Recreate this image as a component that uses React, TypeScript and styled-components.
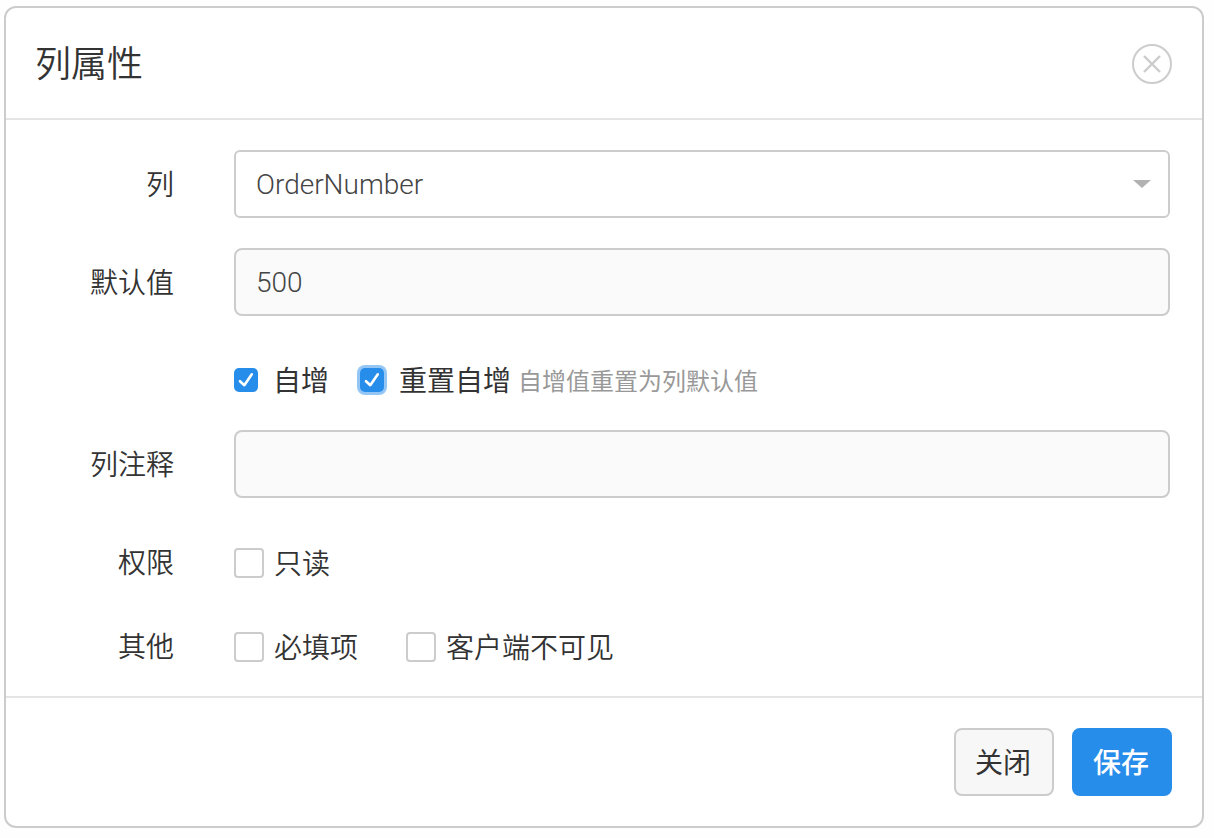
import React, { useState } from "react";
import styled, { createGlobalStyle, css } from "styled-components";

const GlobalStyle = createGlobalStyle`
  *, *::before, *::after { box-sizing: border-box; }
  body {
    margin: 0;
    background: #fefefe;
    color: #333;
    font-family: Roboto, "Noto Sans CJK SC", sans-serif;
    font-size: 28px;
    font-weight: 350;
    line-height: 40px;
  }
`;

const Page = styled.main`
  padding: 6px 10px 10px 4px;
`;

const Dialog = styled.form`
  border: 2px solid #ccc;
  border-radius: 12px;
  background: #fff;
`;

const Header = styled.header`
  display: flex;
  align-items: center;
  justify-content: space-between;
  padding: 28px 30px 26px 29px;
  border-bottom: 2px solid #e4e4e4;
`;

const Title = styled.h1`
  margin: 0;
  padding-top: 2px;
  font-size: 36px;
  font-weight: 350;
  line-height: 54px;
`;

const CloseIcon = styled.button`
  display: flex;
  width: 40px;
  height: 40px;
  padding: 0;
  border: 0;
  background: none;
  cursor: pointer;
`;

const Body = styled.div`
  padding: 30px 32px 0 30px;
`;

const Row = styled.div<{ $compact?: boolean }>`
  display: grid;
  grid-template-columns: 138px minmax(0, 1fr);
  column-gap: 60px;
  align-items: center;
  min-height: 68px;
  margin-bottom: ${(p) => (p.$compact ? 16 : 30)}px;
`;

const labelText = css`
  grid-column: 1;
  padding-top: 4px;
  text-align: right;
`;

const FieldLabel = styled.label`
  ${labelText}
`;

const GroupLabel = styled.span`
  ${labelText}
`;

const control = css`
  display: block;
  width: 100%;
  height: 68px;
  padding: 0 20px;
  border: 2px solid #ccc;
  font: inherit;
  font-weight: 300;
  color: #444;
  outline: none;
`;

const TextInput = styled.input`
  ${control}
  border-radius: 8px;
  background: #fafafa;
`;

const SelectBox = styled.div`
  position: relative;
`;

const Select = styled.select`
  ${control}
  padding-top: 2px;
  appearance: none;
  border-radius: 6px;
  background: #fff;
`;

const Arrow = styled.svg`
  position: absolute;
  top: 30px;
  right: 19px;
  pointer-events: none;
`;

const Options = styled.div<{ $gap: number }>`
  grid-column: 2;
  display: flex;
  align-items: center;
  gap: ${(p) => p.$gap}px;
`;

const Option = styled.label<{ $filled?: boolean }>`
  display: flex;
  align-items: center;
  gap: ${(p) => (p.$filled ? 15 : 10)}px;
  padding-top: ${(p) => (p.$filled ? 0 : 2)}px;
  font-weight: ${(p) => (p.$filled ? 400 : 350)};
  cursor: pointer;
`;

const OptionText = styled.span`
  padding-top: 3px;
`;

const Tick = styled.span`
  display: grid;
  > * { grid-area: 1 / 1; }
  > svg { place-self: center; pointer-events: none; }
`;

const Box = styled.input<{ $focused?: boolean }>`
  appearance: none;
  width: 30px;
  height: 30px;
  margin: 0;
  border: 2px solid #ccc;
  border-radius: 4px;
  background: #fff;
  &:checked {
    width: 24px;
    height: 24px;
    border: 0;
    border-radius: 5px;
    background: #278dea;
    ${(p) => p.$focused && "box-shadow: 0 0 0 3px #93c6f5;"}
  }
`;

const Hint = styled.small`
  margin-left: 7px;
  padding-top: 4px;
  font-size: 24px;
  font-weight: 400;
  color: #999;
`;

const Inline = styled.div`
  display: flex;
  align-items: center;
`;

const Footer = styled.footer`
  display: flex;
  justify-content: flex-end;
  gap: 18px;
  padding: 30px;
  border-top: 2px solid #e4e4e4;
`;

const Button = styled.button<{ $primary?: boolean }>`
  width: 100px;
  height: 68px;
  padding: 4px 2px 0 0;
  border: 2px solid ${(p) => (p.$primary ? "#278dea" : "#ccc")};
  border-radius: 8px;
  background: ${(p) => (p.$primary ? "#278dea" : "#f7f7f7")};
  color: ${(p) => (p.$primary ? "#fff" : "#333")};
  font: inherit;
  font-weight: ${(p) => (p.$primary ? 500 : 400)};
  cursor: pointer;
`;

type CheckProps = { text: string; initial?: boolean; focused?: boolean };

function Check({ text, initial = false, focused }: CheckProps) {
  const [on, setOn] = useState(initial);
  return (
    <Option $filled={initial}>
      <Tick>
        <Box
          type="checkbox"
          checked={on}
          $focused={focused}
          onChange={(e) => setOn(e.target.checked)}
        />
        {on && (
          <svg width="24" height="24" viewBox="0 0 24 24" fill="none" aria-hidden="true">
            <path d="M6 13.2l4.3 4L17.8 6.3" stroke="#fff" strokeWidth="2.6" strokeLinecap="round" strokeLinejoin="round" />
          </svg>
        )}
      </Tick>
      <OptionText>{text}</OptionText>
    </Option>
  );
}

export default function App() {
  return (
    <Page>
      <GlobalStyle />
      <Dialog onSubmit={(e) => e.preventDefault()}>
        <Header>
          <Title>列属性</Title>
          <CloseIcon type="button" aria-label="关闭">
            <svg width="40" height="40" viewBox="0 0 40 40" fill="none" stroke="#ccc" strokeWidth="2" aria-hidden="true">
              <circle cx="20" cy="20" r="19" />
              <path d="M12 12l16 16M28 12L12 28" strokeWidth="2.4" />
            </svg>
          </CloseIcon>
        </Header>
        <Body>
          <Row>
            <FieldLabel htmlFor="column">列</FieldLabel>
            <SelectBox>
              <Select id="column" defaultValue="OrderNumber">
                <option>OrderNumber</option>
              </Select>
              <Arrow width="18" height="8" viewBox="0 0 18 8" aria-hidden="true">
                <path d="M0 0h18L9 8z" fill="#b2b2b2" />
              </Arrow>
            </SelectBox>
          </Row>
          <Row>
            <FieldLabel htmlFor="default">默认值</FieldLabel>
            <TextInput id="default" defaultValue="500" />
          </Row>
          <Row $compact>
            <Options $gap={31}>
              <Check text="自增" initial />
              <Inline>
                <Check text="重置自增" initial focused />
                <Hint>自增值重置为列默认值</Hint>
              </Inline>
            </Options>
          </Row>
          <Row>
            <FieldLabel htmlFor="comment">列注释</FieldLabel>
            <TextInput id="comment" />
          </Row>
          <Row $compact role="group" aria-labelledby="access">
            <GroupLabel id="access">权限</GroupLabel>
            <Options $gap={48}>
              <Check text="只读" />
            </Options>
          </Row>
          <Row $compact role="group" aria-labelledby="other">
            <GroupLabel id="other">其他</GroupLabel>
            <Options $gap={48}>
              <Check text="必填项" />
              <Check text="客户端不可见" />
            </Options>
          </Row>
        </Body>
        <Footer>
          <Button type="button">关闭</Button>
          <Button type="submit" $primary>保存</Button>
        </Footer>
      </Dialog>
    </Page>
  );
}
